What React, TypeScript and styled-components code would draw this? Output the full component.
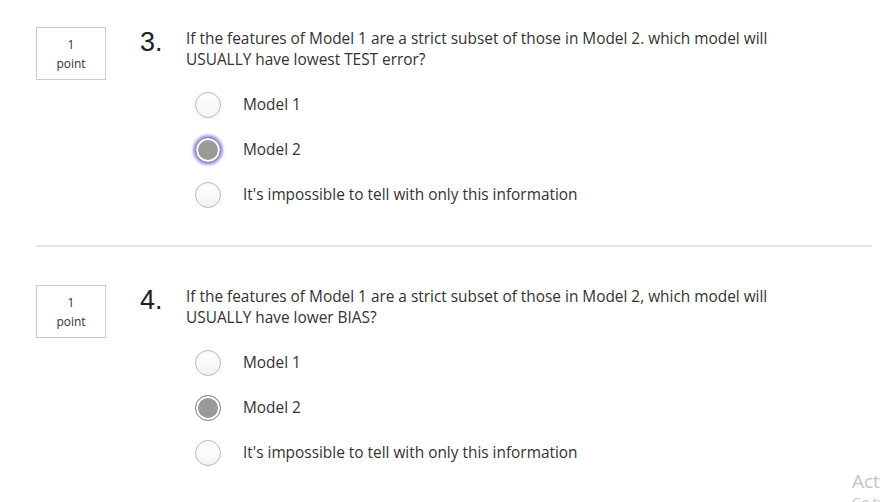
import React from "react";
import styled, { createGlobalStyle, css } from "styled-components";

const GlobalStyle = createGlobalStyle`
  html, body {
    margin: 0;
    padding: 0;
    background: #ffffff;
    overflow: hidden;
  }
  body {
    font-family: "Open Sans", "Noto Sans", sans-serif;
    color: #333333;
  }
  * { box-sizing: border-box; }
`;

const Page = styled.div`
  position: relative;
  width: 880px;
  height: 502px;
  padding: 27px 0 0 36px;
  overflow: hidden;
`;

const Question = styled.section`
  display: flex;
  align-items: flex-start;
  width: 836px;
`;

const PointBox = styled.div`
  width: 70px;
  height: 53px;
  border: 1px solid #cccccc;
  display: flex;
  flex-direction: column;
  align-items: center;
  justify-content: center;
  font-size: 12px;
  line-height: 19px;
  color: #333333;
  flex-shrink: 0;
`;

const Number = styled.div`
  width: 46px;
  margin-left: 34px;
  margin-top: 2px;
  font-family: "Liberation Sans", Arial, sans-serif;
  font-size: 27px;
  line-height: 27px;
  color: #222222;
  flex-shrink: 0;
`;

const Body = styled.div`
  display: flex;
  flex-direction: column;
  padding-top: 1px;
`;

const Prompt = styled.p`
  margin: 0;
  width: 620px;
  font-size: 15.4px;
  line-height: 21px;
  color: #333333;
`;

const Options = styled.div`
  display: flex;
  flex-direction: column;
  margin-top: 12px;
  padding-left: 9px;
`;

const OptionRow = styled.label`
  display: flex;
  align-items: center;
  height: 45px;
  gap: 22px;
  font-size: 15.4px;
  color: #333333;
`;

const Radio = styled.span<{ $checked?: boolean; $focused?: boolean }>`
  width: 26px;
  height: 26px;
  border-radius: 50%;
  flex-shrink: 0;
  border: 1px solid #b8b8b8;
  background: linear-gradient(#ffffff, #f3f3f3);
  ${(p) =>
    p.$checked &&
    css`
      border-color: #8c8c8c;
      background: #9a9a9a;
      box-shadow: inset 0 0 0 2px #ffffff;
    `}
  ${(p) =>
    p.$focused &&
    css`
      box-shadow: inset 0 0 0 2px #ffffff, 0 0 3px 2px rgba(120, 110, 240, 0.75);
    `}
`;

const Divider = styled.hr`
  width: 836px;
  height: 2px;
  border: none;
  background: #e4e4e4;
  margin: 28px 0 38px 0;
`;

const Watermark = styled.div`
  position: absolute;
  left: 852px;
  top: 468px;
  white-space: nowrap;
  color: #c4c4c4;
  font-family: "Open Sans", "Noto Sans", sans-serif;
`;

const WatermarkTitle = styled.div`
  font-size: 19px;
  line-height: 26px;
`;

const WatermarkSub = styled.div`
  font-size: 13px;
  line-height: 16px;
`;

type Opt = { label: string; checked?: boolean; focused?: boolean };

const questions: { n: number; text: string; options: Opt[] }[] = [
  {
    n: 3,
    text:
      "If the features of Model 1 are a strict subset of those in Model 2. which model will USUALLY have lowest TEST error?",
    options: [
      { label: "Model 1" },
      { label: "Model 2", checked: true, focused: true },
      { label: "It's impossible to tell with only this information" },
    ],
  },
  {
    n: 4,
    text:
      "If the features of Model 1 are a strict subset of those in Model 2, which model will USUALLY have lower BIAS?",
    options: [
      { label: "Model 1" },
      { label: "Model 2", checked: true },
      { label: "It's impossible to tell with only this information" },
    ],
  },
];

export default function App() {
  return (
    <>
      <GlobalStyle />
      <Page>
        {questions.map((q, i) => (
          <React.Fragment key={q.n}>
            {i > 0 && <Divider />}
            <Question>
              <PointBox>
                <span>1</span>
                <span>point</span>
              </PointBox>
              <Number>{q.n}.</Number>
              <Body>
                <Prompt>{q.text}</Prompt>
                <Options>
                  {q.options.map((o) => (
                    <OptionRow key={o.label}>
                      <Radio $checked={o.checked} $focused={o.focused} />
                      <span>{o.label}</span>
                    </OptionRow>
                  ))}
                </Options>
              </Body>
            </Question>
          </React.Fragment>
        ))}
        <Watermark>
          <WatermarkTitle>Activate Windows</WatermarkTitle>
          <WatermarkSub>Go to Settings to activate Windows.</WatermarkSub>
        </Watermark>
      </Page>
    </>
  );
}
